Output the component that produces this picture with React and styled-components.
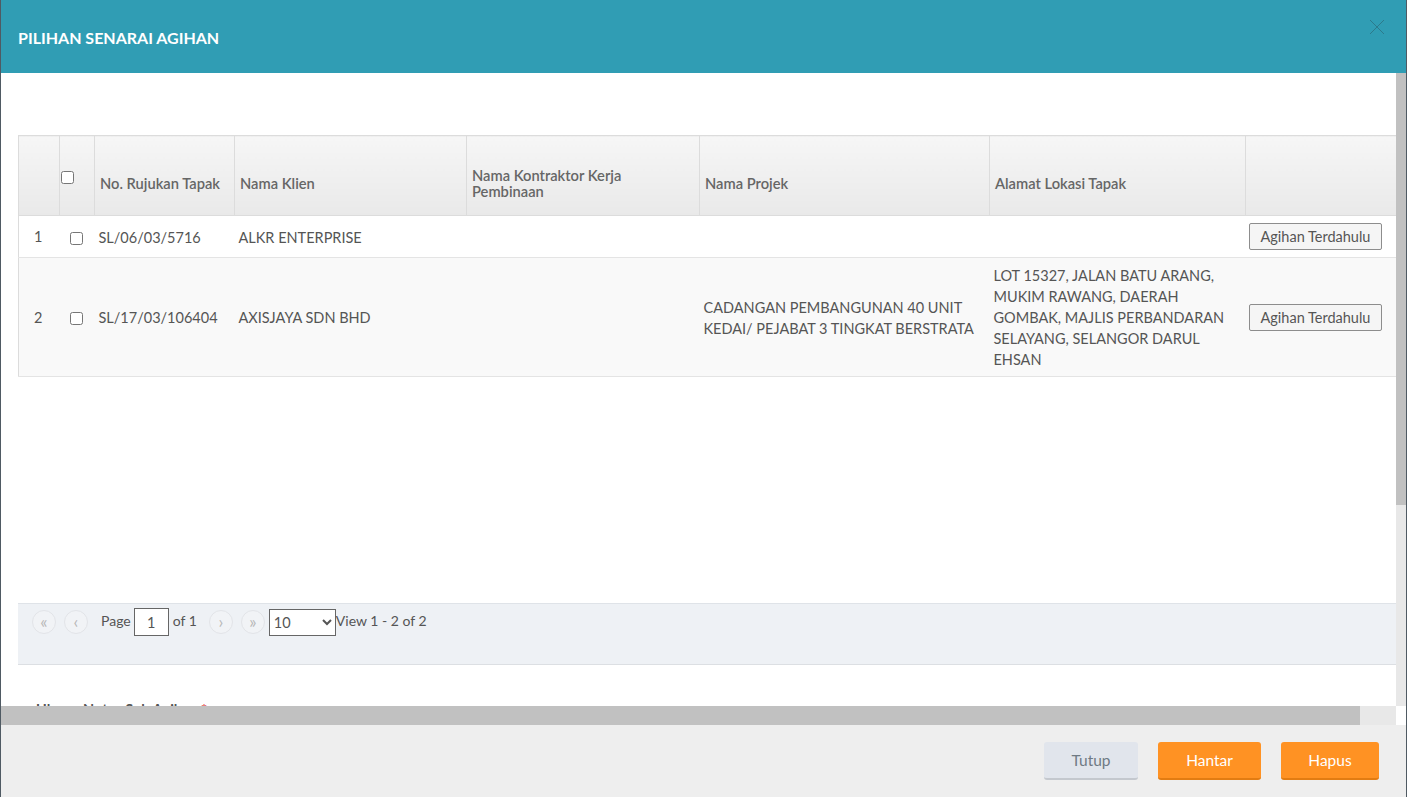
import React from "react";
import styled, { createGlobalStyle } from "styled-components";

const Global = createGlobalStyle`
  html, body { margin: 0; padding: 0; }
  body {
    background: #4f5a63;
    font-family: Lato, "Noto Sans", sans-serif;
    overflow: hidden;
  }
  * { box-sizing: border-box; }
`;

const Modal = styled.div`
  margin: 0 1px;
  height: 797px;
  display: flex;
  flex-direction: column;
  background: #fff;
`;

const Header = styled.div`
  height: 73px;
  flex: none;
  background: #309db4;
  display: flex;
  align-items: center;
  justify-content: space-between;
  padding: 0 20px 0 17px;
`;

const Title = styled.h4`
  margin: 0;
  font-size: 16px;
  font-weight: 700;
  color: #fff;
  padding-top: 2px;
`;

const Close = styled.button`
  border: 0;
  background: transparent;
  padding: 0;
  width: 18px;
  height: 18px;
  align-self: flex-start;
  margin-top: 18px;
  cursor: pointer;
  display: flex;
  align-items: center;
  justify-content: center;
`;

const Body = styled.div`
  flex: 1;
  min-height: 0;
  display: flex;
  flex-direction: column;
`;

const BodyRow = styled.div`
  flex: 1;
  min-height: 0;
  display: flex;
`;

const Viewport = styled.div`
  flex: 1;
  min-width: 0;
  overflow: hidden;
`;

const VBar = styled.div`
  width: 10px;
  flex: none;
  display: flex;
  flex-direction: column;
  background: #e8e8e8;
`;

const VThumb = styled.div`
  height: 432px;
  background: #c1c1c1;
`;

const HBar = styled.div`
  height: 19px;
  flex: none;
  display: flex;
  background: #e8e8e8;
`;

const HThumb = styled.div`
  width: 1359px;
  background: #c1c1c1;
`;

const Corner = styled.div`
  width: 10px;
  margin-left: auto;
  background: #fff;
`;

const Content = styled.div`
  width: 1433px;
  min-height: 927px;
  padding: 62px 18px 0 17px;
`;

const GridBody = styled.div`
  height: 468px;
`;

const Table = styled.table`
  width: 1398px;
  table-layout: fixed;
  border-collapse: collapse;
  border-left: 1px solid #dcdcdc;
  border-top: 1px solid #dcdcdc;
  font-size: 14.5px;
  color: #555;
`;

const Th = styled.th`
  height: 80px;
  background: linear-gradient(#f6f6f6, #e9e9e9);
  border-right: 1px solid #dcdcdc;
  border-bottom: 1px solid #dcdcdc;
  text-align: left;
  vertical-align: middle;
  font-weight: 600;
  font-size: 14.7px;
  color: #666;
  line-height: 16px;
  padding: ${(p) => (p.$top ? "0 2px 0 1px" : "15px 6px 0 5px")};
`;

const Tr = styled.tr`
  background: ${(p) => (p.$alt ? "#f9f9f9" : "#fff")};
  border-bottom: 1px solid #e4e4e4;
`;

const Td = styled.td`
  padding: ${(p) =>
    p.$center ? "7px 5px 7px 3px" : p.$btn ? "7px 4px" : "7px 4px 6px"};
  line-height: 21px;
  vertical-align: middle;
  text-align: ${(p) => (p.$center ? "center" : "left")};
  word-wrap: break-word;
`;

const Check = styled.input.attrs({ type: "checkbox" })`
  margin: 0;
  width: 13px;
  height: 13px;
  vertical-align: middle;
`;

const RowButton = styled.button`
  font-family: Lato, sans-serif;
  font-size: 14.5px;
  color: #555;
  height: 27px;
  padding: 0 11px;
  border: 1px solid #8d8d8d;
  border-radius: 2px;
  background: #f5f5f5;
  margin-left: -1px;
  vertical-align: middle;
`;

const Pager = styled.div`
  width: 1398px;
  height: 62px;
  background: #eef1f5;
  border-top: 1px solid #dfe3e8;
  border-bottom: 1px solid #dcdfe3;
  display: flex;
  align-items: flex-start;
  padding: 3px 0 0 14px;
  font-size: 14px;
  color: #555;
`;

const Circle = styled.span`
  width: 24px;
  height: 24px;
  border-radius: 50%;
  border: 1px solid #e2e4e8;
  background: #f1f3f6;
  color: #b8b8b8;
  font-size: 17px;
  line-height: 1;
  display: flex;
  align-items: center;
  justify-content: center;
  padding-bottom: 2px;
  margin: 3px ${(p) => p.$mr || 8}px 0 0;
`;

const PagerText = styled.span`
  line-height: 28px;
  margin: ${(p) => p.$m || "0"};
`;

const PageInput = styled.input`
  width: 35px;
  height: 28px;
  border: 1px solid #666;
  text-align: center;
  font-family: Lato, sans-serif;
  font-size: 14.5px;
  color: #555;
  padding: 0;
  margin: 1px 4px 0 0;
`;

const Select = styled.select`
  width: 67px;
  height: 27px;
  border: 1px solid #666;
  font-family: Lato, sans-serif;
  font-size: 14.5px;
  color: #555;
  background: #fff;
  margin-top: 2px;
  border-radius: 0;
`;

const Label = styled.div`
  margin: 36px 0 0 18px;
  font-size: 14.5px;
  font-weight: 700;
  color: #555;
  span { color: #e0433d; }
`;

const Footer = styled.div`
  height: 72px;
  flex: none;
  background: #eeeeee;
  display: flex;
  justify-content: flex-end;
  align-items: flex-start;
  gap: 20px;
  padding: 17px 27px 0 0;
`;

const FootButton = styled.button`
  height: 38px;
  width: ${(p) => p.$w}px;
  border: 0;
  border-radius: 3px;
  font-family: Lato, sans-serif;
  font-size: 15.5px;
  background: ${(p) => (p.$primary ? "#ff9223" : "#e1e5ec")};
  color: ${(p) => (p.$primary ? "#fff" : "#6f7a84")};
  border-bottom: 2px solid ${(p) => (p.$primary ? "#e27c12" : "#c4c8ce")};
  cursor: pointer;
`;

const cols = [41, 35, 140, 232, 233, 290, 256, 171];

const rows = [
  {
    no: "1",
    ref: "SL/06/03/5716",
    klien: "ALKR ENTERPRISE",
    kontraktor: "",
    projek: "",
    alamat: "",
  },
  {
    no: "2",
    ref: "SL/17/03/106404",
    klien: "AXISJAYA SDN BHD",
    kontraktor: "",
    projek: "CADANGAN PEMBANGUNAN 40 UNIT KEDAI/ PEJABAT 3 TINGKAT BERSTRATA",
    alamat:
      "LOT 15327, JALAN BATU ARANG, MUKIM RAWANG, DAERAH GOMBAK, MAJLIS PERBANDARAN SELAYANG, SELANGOR DARUL EHSAN",
  },
];

export default function App() {
  return (
    <>
      <Global />
      <Modal>
        <Header>
          <Title>PILIHAN SENARAI AGIHAN</Title>
          <Close aria-label="close">
            <svg width="16" height="16" viewBox="0 0 16 16">
              <path d="M1 1 L15 15 M15 1 L1 15" stroke="#2b6f7f" strokeOpacity="0.75" strokeWidth="1" />
            </svg>
          </Close>
        </Header>
        <Body>
          <BodyRow>
            <Viewport>
              <Content>
                <GridBody>
                  <Table>
                    <colgroup>
                      {cols.map((w, i) => (
                        <col key={i} style={{ width: w }} />
                      ))}
                    </colgroup>
                    <thead>
                      <tr>
                        <Th />
                        <Th $top>
                          <Check />
                        </Th>
                        <Th>No. Rujukan Tapak</Th>
                        <Th>Nama Klien</Th>
                        <Th>Nama Kontraktor Kerja Pembinaan</Th>
                        <Th>Nama Projek</Th>
                        <Th>Alamat Lokasi Tapak</Th>
                        <Th />
                      </tr>
                    </thead>
                    <tbody>
                      {rows.map((r, i) => (
                        <Tr key={r.no} $alt={i % 2 === 1}>
                          <Td $center>{r.no}</Td>
                          <Td $center>
                            <Check />
                          </Td>
                          <Td>{r.ref}</Td>
                          <Td>{r.klien}</Td>
                          <Td>{r.kontraktor}</Td>
                          <Td>{r.projek}</Td>
                          <Td>{r.alamat}</Td>
                          <Td $btn>
                            <RowButton>Agihan Terdahulu</RowButton>
                          </Td>
                        </Tr>
                      ))}
                    </tbody>
                  </Table>
                </GridBody>
                <Pager>
                  <Circle>«</Circle>
                  <Circle $mr={13}>‹</Circle>
                  <PagerText $m="0 3px 0 0">Page</PagerText>
                  <PageInput defaultValue="1" />
                  <PagerText $m="0 12px 0 0">of 1</PagerText>
                  <Circle>›</Circle>
                  <Circle $mr={4}>»</Circle>
                  <Select defaultValue="10">
                    <option value="10">10</option>
                    <option value="20">20</option>
                    <option value="30">30</option>
                  </Select>
                  <PagerText>View 1 - 2 of 2</PagerText>
                </Pager>
                <Label>
                  Ulasan Notes Sub Agihan <span>*</span>
                </Label>
              </Content>
            </Viewport>
            <VBar>
              <VThumb />
            </VBar>
          </BodyRow>
          <HBar>
            <HThumb />
            <Corner />
          </HBar>
        </Body>
        <Footer>
          <FootButton $w={94}>Tutup</FootButton>
          <FootButton $w={103} $primary>
            Hantar
          </FootButton>
          <FootButton $w={98} $primary>
            Hapus
          </FootButton>
        </Footer>
      </Modal>
    </>
  );
}
